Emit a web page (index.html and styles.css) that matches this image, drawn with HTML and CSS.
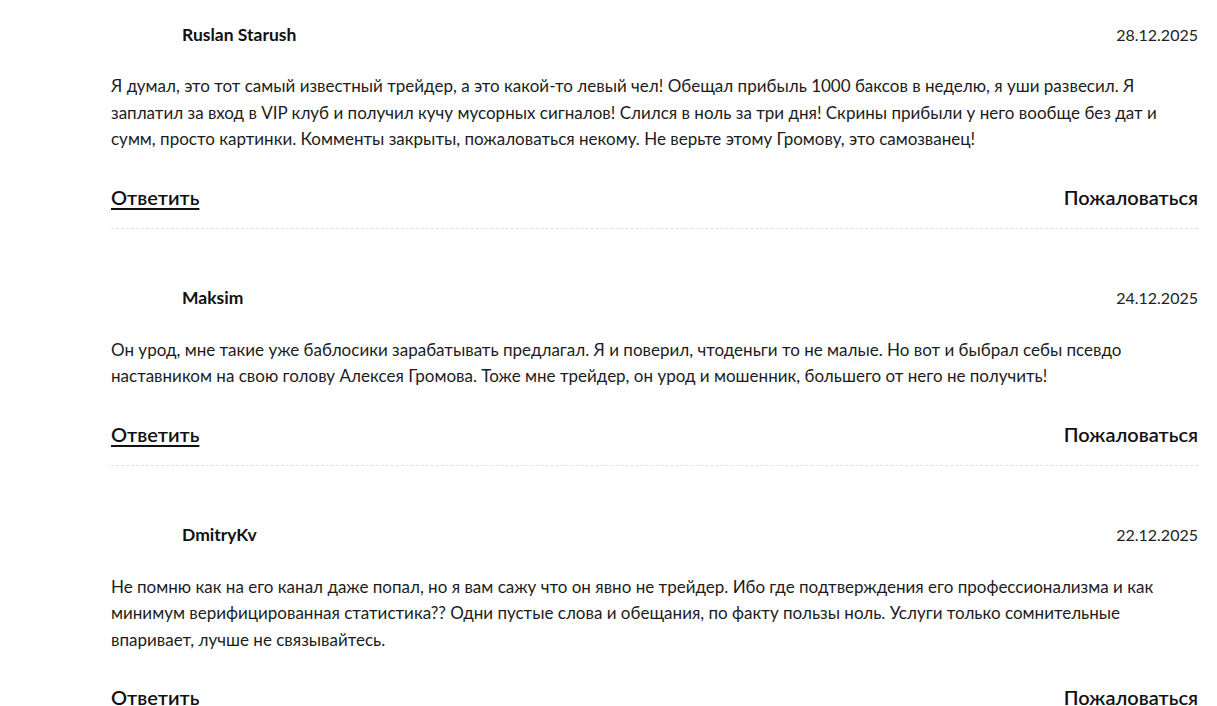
FILE: index.html
```html
<!DOCTYPE html>
<html lang="ru">
<head>
<meta charset="utf-8">
<title>Отзывы</title>
<link rel="stylesheet" href="styles.css">
</head>
<body>
<div class="comments">
  <div class="comment">
    <div class="comment-head">
      <span class="author">Ruslan Starush</span>
      <span class="date">28.12.2025</span>
    </div>
    <p class="comment-text">Я думал, это тот самый известный трейдер, а это какой-то левый чел! Обещал прибыль 1000 баксов в неделю, я уши развесил. Я заплатил за вход в VIP клуб и получил кучу мусорных сигналов! Слился в ноль за три дня! Скрины прибыли у него вообще без дат и сумм, просто картинки. Комменты закрыты, пожаловаться некому. Не верьте этому Громову, это самозванец!</p>
    <div class="comment-actions">
      <a class="reply" href="#">Ответить</a>
      <a class="report" href="#">Пожаловаться</a>
    </div>
  </div>
  <div class="comment">
    <div class="comment-head">
      <span class="author">Maksim</span>
      <span class="date">24.12.2025</span>
    </div>
    <p class="comment-text">Он урод, мне такие уже баблосики зарабатывать предлагал. Я и поверил, чтоденьги то не малые. Но вот и быбрал себы псевдо наставником на свою голову Алексея Громова. Тоже мне трейдер, он урод и мошенник, большего от него не получить!</p>
    <div class="comment-actions">
      <a class="reply" href="#">Ответить</a>
      <a class="report" href="#">Пожаловаться</a>
    </div>
  </div>
  <div class="comment">
    <div class="comment-head">
      <span class="author">DmitryKv</span>
      <span class="date">22.12.2025</span>
    </div>
    <p class="comment-text">Не помню как на его канал даже попал, но я вам сажу что он явно не трейдер. Ибо где подтверждения его профессионализма и как минимум верифицированная статистика?? Одни пустые слова и обещания, по факту пользы ноль. Услуги только сомнительные впаривает, лучше не связывайтесь.</p>
    <div class="comment-actions">
      <a class="reply" href="#">Ответить</a>
      <a class="report" href="#">Пожаловаться</a>
    </div>
  </div>
</div>
</body>
</html>
```

FILE: styles.css
```css
html, body {
  margin: 0;
  padding: 0;
  background: #fff;
}

body {
  font-family: Lato, "Noto Sans", sans-serif;
  color: #1c1c1c;
}

.comments {
  width: 1087px;
  margin-left: 111px;
}

.comment {
  padding: 59px 0 19px;
  border-bottom: 1px dashed #e0e0e0;
}

.comment:first-child {
  padding-top: 24px;
}

.comment-head {
  display: flex;
  justify-content: space-between;
  align-items: center;
  padding-left: 71px;
  height: 20px;
}

.author {
  font-size: 17.5px;
  font-weight: 700;
  color: #111;
}

.date {
  font-size: 16px;
  color: #222;
}

.comment-text {
  margin: 29px 0 0;
  font-size: 17px;
  line-height: 26.5px;
}

.comment-actions {
  display: flex;
  justify-content: space-between;
  align-items: center;
  margin-top: 32px;
  height: 24px;
}

.comment-actions a {
  font-size: 20px;
  font-weight: 600;
  color: #111;
}

.reply {
  text-decoration: underline;
  text-underline-offset: 3px;
  text-decoration-thickness: 2px;
}

.report {
  text-decoration: none;
}
```
